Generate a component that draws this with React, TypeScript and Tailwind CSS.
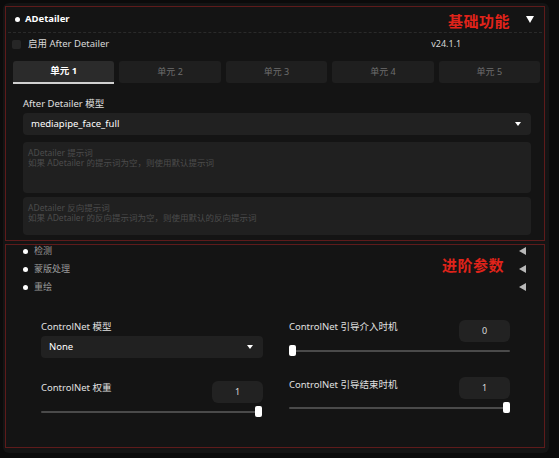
import React from 'react';

const font = { fontFamily: '"Noto Sans", "Noto Sans CJK SC", sans-serif' };

function Caret() {
  return <span className="w-0 h-0 border-l-[3px] border-r-[3px] border-t-[4px] border-l-transparent border-r-transparent border-t-white" />;
}

function Slider({ value }: { value: number }) {
  return (
    <div className="relative h-[11px] flex items-center">
      <div className="w-full h-[2px] bg-[#4a4a4a] rounded-full" />
      <div
        className="absolute top-0 w-[7px] h-[11px] bg-white rounded-[2px]"
        style={{ left: `calc(${value * 100}% - ${value * 7}px)` }}
      />
    </div>
  );
}

function NumBox({ v }: { v: string }) {
  return (
    <div className="w-[51px] h-[22px] rounded-md bg-[#222222] flex items-center justify-center text-[9px] text-[#dcdcdc]">
      {v}
    </div>
  );
}

const tabs = ['单元 1', '单元 2', '单元 3', '单元 4', '单元 5'];

export default function App() {
  return (
    <div className="w-[559px] h-[458px] bg-[#0b0b0b] pt-[3px] pl-[3px]" style={font}>
      <div className="relative w-[546px] h-[450px] bg-[#141414] rounded-md pt-[3px] pl-[2px]">
        {/* 基础功能 */}
        <div className="relative w-[540px] h-[235px] border border-[#5e1b1b]">
          <div className="flex items-center h-[26px] pl-[7px] pr-[8px] border-b border-dashed border-[#2a2a2a] mx-[2px]">
            <span className="w-[5px] h-[5px] rounded-full bg-white" />
            <span className="ml-[5px] text-[9.5px] font-bold text-white">ADetailer</span>
            <span className="ml-auto w-0 h-0 border-l-[4px] border-r-[4px] border-t-[7px] border-l-transparent border-r-transparent border-t-white" />
          </div>
          <div className="absolute left-[442px] top-[7px] text-[15px] font-bold text-[#e0231a] leading-none tracking-[0.5px]">基础功能</div>
          <div className="flex items-center h-[20px] mt-[1px] pl-[6px]">
            <span className="w-[9px] h-[9px] rounded-[2px] bg-[#262626]" />
            <span className="ml-[7px] text-[9.5px] text-[#d8d8d8]">启用 After Detailer</span>
            <span className="ml-[322px] text-[9px] text-[#d8d8d8]">v24.1.1</span>
          </div>
          <div className="flex gap-[5px] ml-[7px] mt-[7px] w-[527px]">
            {tabs.map((t, i) => (
              <div
                key={t}
                className={
                  i === 0
                    ? 'flex-1 h-[23px] rounded-t-[3px] bg-[#2b2b2b] border-b-2 border-[#d0d0d0] flex items-center justify-center text-[9.5px] font-bold text-white'
                    : 'flex-1 h-[22px] rounded-[3px] bg-[#1f1f1f] flex items-center justify-center text-[9px] text-[#6e6e6e]'
                }
              >
                {t}
              </div>
            ))}
          </div>
          <div className="ml-[17px] w-[508px]">
            <div className="mt-[13px] text-[9.5px] text-[#e0e0e0] leading-[14px]">After Detailer 模型</div>
            <div className="mt-[2px] h-[22px] rounded-[4px] bg-[#212121] flex items-center pl-[8px] pr-[10px]">
              <span className="text-[9.5px] text-white">mediapipe_face_full</span>
              <span className="ml-auto flex"><Caret /></span>
            </div>
            <div className="mt-[7px] h-[51px] rounded-[4px] bg-[#202020] pl-[5px] pt-[6px] text-[8.5px] leading-[10px] text-[#4c4c4c]">
              <div>ADetailer 提示词</div>
              <div>如果 ADetailer 的提示词为空，则使用默认提示词</div>
            </div>
            <div className="mt-[4px] h-[38px] rounded-[4px] bg-[#202020] pl-[5px] pt-[6px] text-[8.5px] leading-[10px] text-[#4c4c4c]">
              <div>ADetailer 反向提示词</div>
              <div>如果 ADetailer 的反向提示词为空，则使用默认的反向提示词</div>
            </div>
          </div>
        </div>

        {/* 进阶参数 */}
        <div className="relative mt-[3px] w-[540px] h-[204px] border border-[#5e1b1b]">
          <div className="absolute left-[436px] top-[13px] text-[15px] font-bold text-[#e0231a] leading-none tracking-[0.5px]">进阶参数</div>
          <div className="-mt-[3px]">
            {['检测', '蒙版处理', '重绘'].map((t) => (
              <div key={t} className="flex items-center h-[18px] pl-[17px] pr-[18px]">
                <span className="w-[5px] h-[5px] rounded-full bg-white" />
                <span className="ml-[6px] text-[9px] text-[#9a9a9a]">{t}</span>
                <span className="ml-auto w-0 h-0 border-t-[4px] border-b-[4px] border-r-[7px] border-t-transparent border-b-transparent border-r-[#b8b8b8]" />
              </div>
            ))}
          </div>
          <div className="grid grid-cols-[222px_221px] gap-x-[26px] ml-[35px] mt-[24px]">
            <div>
              <div className="text-[9.5px] text-[#e0e0e0] leading-[14px]">ControlNet 模型</div>
              <div className="mt-[2px] h-[22px] rounded-[4px] bg-[#212121] flex items-center pl-[8px] pr-[10px]">
                <span className="text-[9.5px] text-white">None</span>
                <span className="ml-auto flex"><Caret /></span>
              </div>
              <div className="mt-[23px] flex items-start justify-between">
                <span className="text-[9.5px] text-[#e0e0e0] leading-[14px]">ControlNet 权重</span>
                <NumBox v="1" />
              </div>
              <div className="mt-[3px] pr-[1px]"><Slider value={1} /></div>
            </div>
            <div>
              <div className="flex items-start justify-between">
                <span className="text-[9.5px] text-[#e0e0e0] leading-[14px]">ControlNet 引导介入时机</span>
                <NumBox v="0" />
              </div>
              <div className="mt-[3px]"><Slider value={0} /></div>
              <div className="mt-[21px] flex items-start justify-between">
                <span className="mt-[1px] text-[9.5px] text-[#e0e0e0] leading-[14px]">ControlNet 引导结束时机</span>
                <NumBox v="1" />
              </div>
              <div className="mt-[3px]"><Slider value={1} /></div>
            </div>
          </div>
        </div>
      </div>
    </div>
  );
}
